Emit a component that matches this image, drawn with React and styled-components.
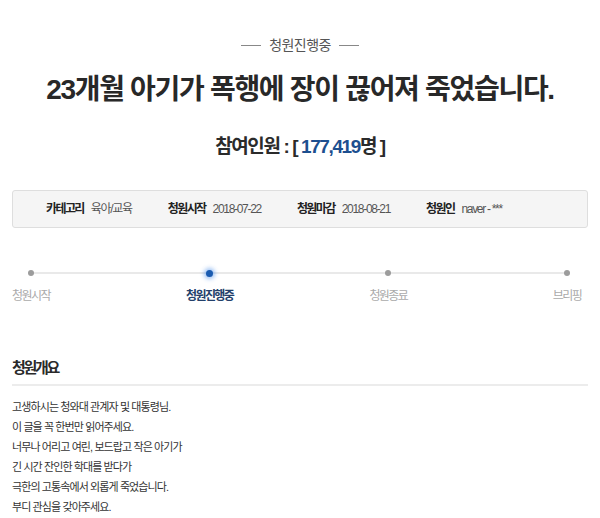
import React from 'react';
import styled, { createGlobalStyle } from 'styled-components';

const GlobalStyle = createGlobalStyle`
  body {
    margin: 0;
    background: #fff;
    font-family: "Liberation Sans", "Noto Sans CJK KR", sans-serif;
  }
`;

const steps = [
  { label: '청원시작' },
  { label: '청원진행중', active: true },
  { label: '청원종료' },
  { label: '브리핑' },
];

const body = [
  '고생하시는 청와대 관계자 및 대통령님.',
  '이 글을 꼭 한번만 읽어주세요.',
  '너무나 어리고 여린, 보드랍고 작은 아기가',
  '긴 시간 잔인한 학대를 받다가',
  '극한의 고통속에서 외롭게 죽었습니다.',
  '부디 관심을 갖아주세요.',
];

const App = () => {
  return (
    <Page>
      <GlobalStyle />
      <Status>청원진행중</Status>
      <Title>23개월 아기가 폭행에 장이 끊어져 죽었습니다.</Title>
      <Count>
        참여인원 : [ <Num>177,419</Num>명 ]
      </Count>
      <InfoBox>
        <InfoItem><b>카테고리</b><span>육아/교육</span></InfoItem>
        <InfoItem><b>청원시작</b><span>2018-07-22</span></InfoItem>
        <InfoItem><b>청원마감</b><span>2018-08-21</span></InfoItem>
        <InfoItem><b>청원인</b><span>naver - ***</span></InfoItem>
      </InfoBox>
      <Steps>
        {steps.map(s => (
          <Step key={s.label}>
            <Dot active={s.active} />
            <StepLabel active={s.active}>{s.label}</StepLabel>
          </Step>
        ))}
      </Steps>
      <SectionTitle>청원개요</SectionTitle>
      <Body>
        {body.map(line => (
          <p key={line}>{line}</p>
        ))}
      </Body>
    </Page>
  );
};

export default App;

const Page = styled.div`
  width: 576px;
  padding: 35px 12px 0;
`;

const Status = styled.div`
  display: flex;
  align-items: center;
  justify-content: center;
  gap: 8px;
  font-size: 14px;
  line-height: 20px;
  letter-spacing: -0.6px;
  color: #555;

  &::before, &::after {
    content: '';
    width: 20px;
    height: 1px;
    background: #888;
  }
`;

const Title = styled.h1`
  margin: 17px 0 0;
  text-align: center;
  font-size: 28px;
  line-height: 36px;
  font-weight: 700;
  letter-spacing: -1.3px;
  color: #282828;
`;

const Count = styled.div`
  margin-top: 27px;
  text-align: center;
  font-size: 19px;
  line-height: 24px;
  font-weight: 700;
  letter-spacing: -1.4px;
  color: #2b2b2b;
`;

const Num = styled.span`
  color: #1d4f8f;
`;

const InfoBox = styled.div`
  margin-top: 31px;
  height: 36px;
  display: flex;
  align-items: center;
  gap: 36px;
  padding-left: 33px;
  background: #f5f5f5;
  border: 1px solid #dedede;
  border-radius: 3px;
`;

const InfoItem = styled.div`
  display: flex;
  align-items: center;
  gap: 7px;
  font-size: 12px;
  line-height: 16px;
  color: #555;

  b {
    letter-spacing: -1.6px;
    color: #222;
  }
  span {
    letter-spacing: -1.3px;
  }
`;

const Steps = styled.div`
  position: relative;
  margin: 40px -9px 0 -11px;
  display: flex;
  justify-content: space-between;

  &::before {
    content: '';
    position: absolute;
    top: 4px;
    left: 30px;
    right: 30px;
    height: 2px;
    background: #e9e9e9;
  }
`;

const Step = styled.div`
  position: relative;
  width: 60px;
  display: flex;
  flex-direction: column;
  align-items: center;
  gap: 10px;
`;

const Dot = styled.div`
  width: ${p => (p.active ? '7px' : '6px')};
  height: ${p => (p.active ? '7px' : '6px')};
  margin: ${p => (p.active ? '1.5px 0' : '2px 0')};
  border-radius: 50%;
  background: ${p => (p.active ? '#1a5bb0' : '#9c9c9c')};
  box-shadow: ${p => (p.active ? '0 0 4px 2px rgba(40, 120, 230, 0.45)' : 'none')};
`;

const StepLabel = styled.div`
  font-size: 12px;
  line-height: 16px;
  letter-spacing: -1.6px;
  white-space: nowrap;
  font-weight: ${p => (p.active ? 700 : 400)};
  color: ${p => (p.active ? '#23406a' : '#aaa')};
`;

const SectionTitle = styled.h2`
  margin: 53px 0 0;
  padding-bottom: 5px;
  border-bottom: 2px solid #ececec;
  font-size: 15px;
  line-height: 22px;
  font-weight: 700;
  letter-spacing: -2.3px;
  color: #2a2a2a;
`;

const Body = styled.div`
  margin-top: 11px;
  font-size: 11px;
  line-height: 20px;
  letter-spacing: -0.9px;
  color: #333;

  p {
    margin: 0;
  }
`;
